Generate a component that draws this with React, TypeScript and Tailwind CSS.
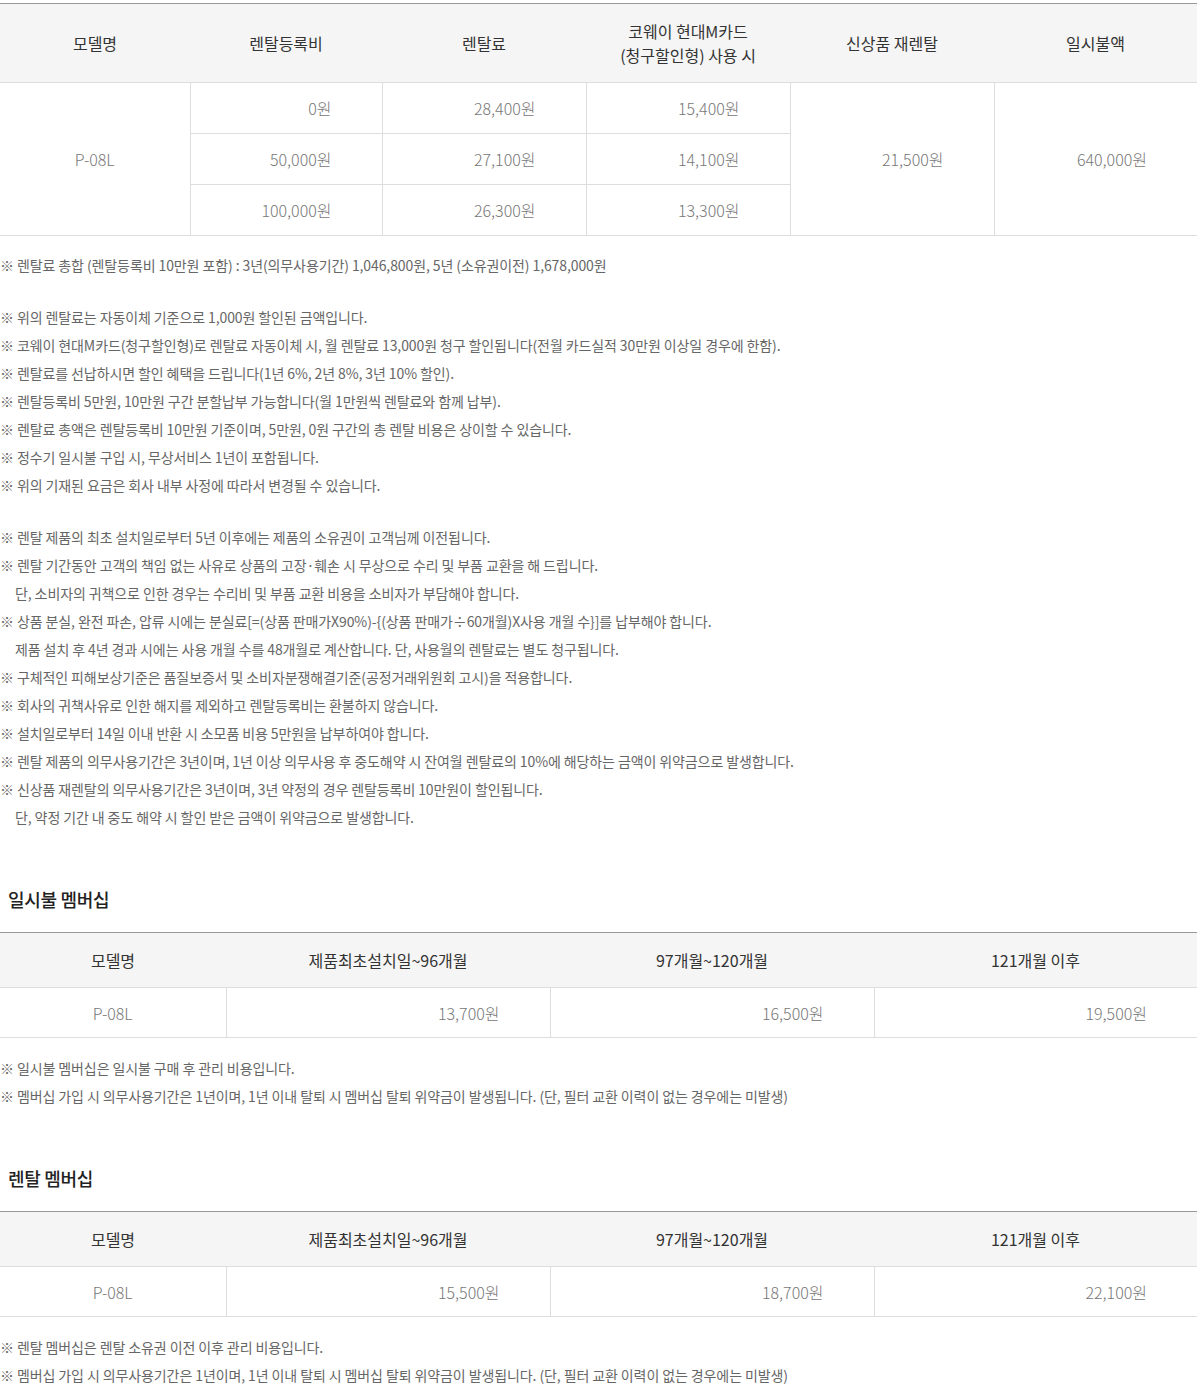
import React from "react";

const font = { fontFamily: '"Noto Sans CJK KR", "Noto Sans", sans-serif' };

type Note = { text: string; indent?: boolean };

const notesA: Note[] = [
  { text: "※ 위의 렌탈료는 자동이체 기준으로 1,000원 할인된 금액입니다." },
  { text: "※ 코웨이 현대M카드(청구할인형)로 렌탈료 자동이체 시, 월 렌탈료 13,000원 청구 할인됩니다(전월 카드실적 30만원 이상일 경우에 한함)." },
  { text: "※ 렌탈료를 선납하시면 할인 혜택을 드립니다(1년 6%, 2년 8%, 3년 10% 할인)." },
  { text: "※ 렌탈등록비 5만원, 10만원 구간 분할납부 가능합니다(월 1만원씩 렌탈료와 함께 납부)." },
  { text: "※ 렌탈료 총액은 렌탈등록비 10만원 기준이며, 5만원, 0원 구간의 총 렌탈 비용은 상이할 수 있습니다." },
  { text: "※ 정수기 일시불 구입 시, 무상서비스 1년이 포함됩니다." },
  { text: "※ 위의 기재된 요금은 회사 내부 사정에 따라서 변경될 수 있습니다." },
];

const notesB: Note[] = [
  { text: "※ 렌탈 제품의 최초 설치일로부터 5년 이후에는 제품의 소유권이 고객님께 이전됩니다." },
  { text: "※ 렌탈 기간동안 고객의 책임 없는 사유로 상품의 고장·훼손 시 무상으로 수리 및 부품 교환을 해 드립니다." },
  { text: "단, 소비자의 귀책으로 인한 경우는 수리비 및 부품 교환 비용을 소비자가 부담해야 합니다.", indent: true },
  { text: "※ 상품 분실, 완전 파손, 압류 시에는 분실료[=(상품 판매가X90%)-{(상품 판매가÷60개월)X사용 개월 수}]를 납부해야 합니다." },
  { text: "제품 설치 후 4년 경과 시에는 사용 개월 수를 48개월로 계산합니다. 단, 사용월의 렌탈료는 별도 청구됩니다.", indent: true },
  { text: "※ 구체적인 피해보상기준은 품질보증서 및 소비자분쟁해결기준(공정거래위원회 고시)을 적용합니다." },
  { text: "※ 회사의 귀책사유로 인한 해지를 제외하고 렌탈등록비는 환불하지 않습니다." },
  { text: "※ 설치일로부터 14일 이내 반환 시 소모품 비용 5만원을 납부하여야 합니다." },
  { text: "※ 렌탈 제품의 의무사용기간은 3년이며, 1년 이상 의무사용 후 중도해약 시 잔여월 렌탈료의 10%에 해당하는 금액이 위약금으로 발생합니다." },
  { text: "※ 신상품 재렌탈의 의무사용기간은 3년이며, 3년 약정의 경우 렌탈등록비 10만원이 할인됩니다." },
  { text: "단, 약정 기간 내 중도 해약 시 할인 받은 금액이 위약금으로 발생합니다.", indent: true },
];

const noteText = "text-[14px] leading-[28px] text-[#666] tracking-[-0.1px]";

const NoteList = ({ notes, className = "" }: { notes: Note[]; className?: string }) => (
  <ul className={className}>
    {notes.map((n, i) => (
      <li key={i} className={`${noteText} ${n.indent ? "pl-[15px]" : ""}`}>
        {n.text}
      </li>
    ))}
  </ul>
);

const th = "bg-[#f5f5f5] text-[16px] font-normal text-[#333] text-center leading-[24px] border-b border-[#dddddd]";
const td = "text-[16px] font-light text-[#777] leading-[24px] border-b border-l border-[#dddddd]";

const MembershipTable = ({ values }: { values: string[] }) => (
  <table className="w-full border-collapse table-fixed border-t border-[#999]">
    <colgroup>
      <col className="w-[226px]" />
      <col className="w-[324px]" />
      <col className="w-[324px]" />
      <col />
    </colgroup>
    <thead>
      <tr>
        <th className={`${th} h-[55px]`}>모델명</th>
        <th className={`${th} h-[55px]`}>제품최초설치일~96개월</th>
        <th className={`${th} h-[55px]`}>97개월~120개월</th>
        <th className={`${th} h-[55px]`}>121개월 이후</th>
      </tr>
    </thead>
    <tbody>
      <tr>
        <td className={`${td} border-l-0 text-center h-[50px]`}>P-08L</td>
        {values.map((v) => (
          <td key={v} className={`${td} text-right pr-[50px] h-[50px]`}>
            {v}
          </td>
        ))}
      </tr>
    </tbody>
  </table>
);

export default function App() {
  const rows = [
    ["0원", "28,400원", "15,400원"],
    ["50,000원", "27,100원", "14,100원"],
    ["100,000원", "26,300원", "13,300원"],
  ];

  return (
    <div className="w-[1197px] bg-white pt-[3px] pb-[10px]" style={font}>
      <table className="w-full border-collapse table-fixed border-t border-[#999]">
        <colgroup>
          <col className="w-[190px]" />
          <col className="w-[192px]" />
          <col className="w-[204px]" />
          <col className="w-[204px]" />
          <col className="w-[204px]" />
          <col />
        </colgroup>
        <thead>
          <tr>
            <th className={`${th} h-[79px]`}>모델명</th>
            <th className={th}>렌탈등록비</th>
            <th className={th}>렌탈료</th>
            <th className={th}>
              코웨이 현대M카드
              <br />
              (청구할인형) 사용 시
            </th>
            <th className={th}>신상품 재렌탈</th>
            <th className={th}>일시불액</th>
          </tr>
        </thead>
        <tbody>
          {rows.map((r, i) => (
            <tr key={i}>
              {i === 0 && (
                <td rowSpan={3} className={`${td} border-l-0 text-center`}>
                  P-08L
                </td>
              )}
              {r.map((v) => (
                <td key={v} className={`${td} text-right pr-[50px] h-[51px]`}>
                  {v}
                </td>
              ))}
              {i === 0 && (
                <>
                  <td rowSpan={3} className={`${td} text-right pr-[50px]`}>
                    21,500원
                  </td>
                  <td rowSpan={3} className={`${td} text-right pr-[50px]`}>
                    640,000원
                  </td>
                </>
              )}
            </tr>
          ))}
        </tbody>
      </table>

      <p className={`mt-[15px] ${noteText}`}>
        ※ 렌탈료 총합 (렌탈등록비 10만원 포함) : 3년(의무사용기간) 1,046,800원, 5년 (소유권이전) 1,678,000원
      </p>
      <NoteList notes={notesA} className="mt-[24px]" />
      <NoteList notes={notesB} className="mt-[24px]" />

      <h3 className="mt-[54px] pl-2 text-[18px] leading-[28px] font-medium text-[#222] tracking-[-0.3px]">일시불 멤버십</h3>
      <div className="mt-[19px]">
        <MembershipTable values={["13,700원", "16,500원", "19,500원"]} />
      </div>
      <NoteList
        className="mt-[16px]"
        notes={[
          { text: "※ 일시불 멤버십은 일시불 구매 후 관리 비용입니다." },
          { text: "※ 멤버십 가입 시 의무사용기간은 1년이며, 1년 이내 탈퇴 시 멤버십 탈퇴 위약금이 발생됩니다. (단, 필터 교환 이력이 없는 경우에는 미발생)" },
        ]}
      />

      <h3 className="mt-[54px] pl-2 text-[18px] leading-[28px] font-medium text-[#222] tracking-[-0.3px]">렌탈 멤버십</h3>
      <div className="mt-[19px]">
        <MembershipTable values={["15,500원", "18,700원", "22,100원"]} />
      </div>
      <NoteList
        className="mt-[16px]"
        notes={[
          { text: "※ 렌탈 멤버십은 렌탈 소유권 이전 이후 관리 비용입니다." },
          { text: "※ 멤버십 가입 시 의무사용기간은 1년이며, 1년 이내 탈퇴 시 멤버십 탈퇴 위약금이 발생됩니다. (단, 필터 교환 이력이 없는 경우에는 미발생)" },
        ]}
      />
    </div>
  );
}
